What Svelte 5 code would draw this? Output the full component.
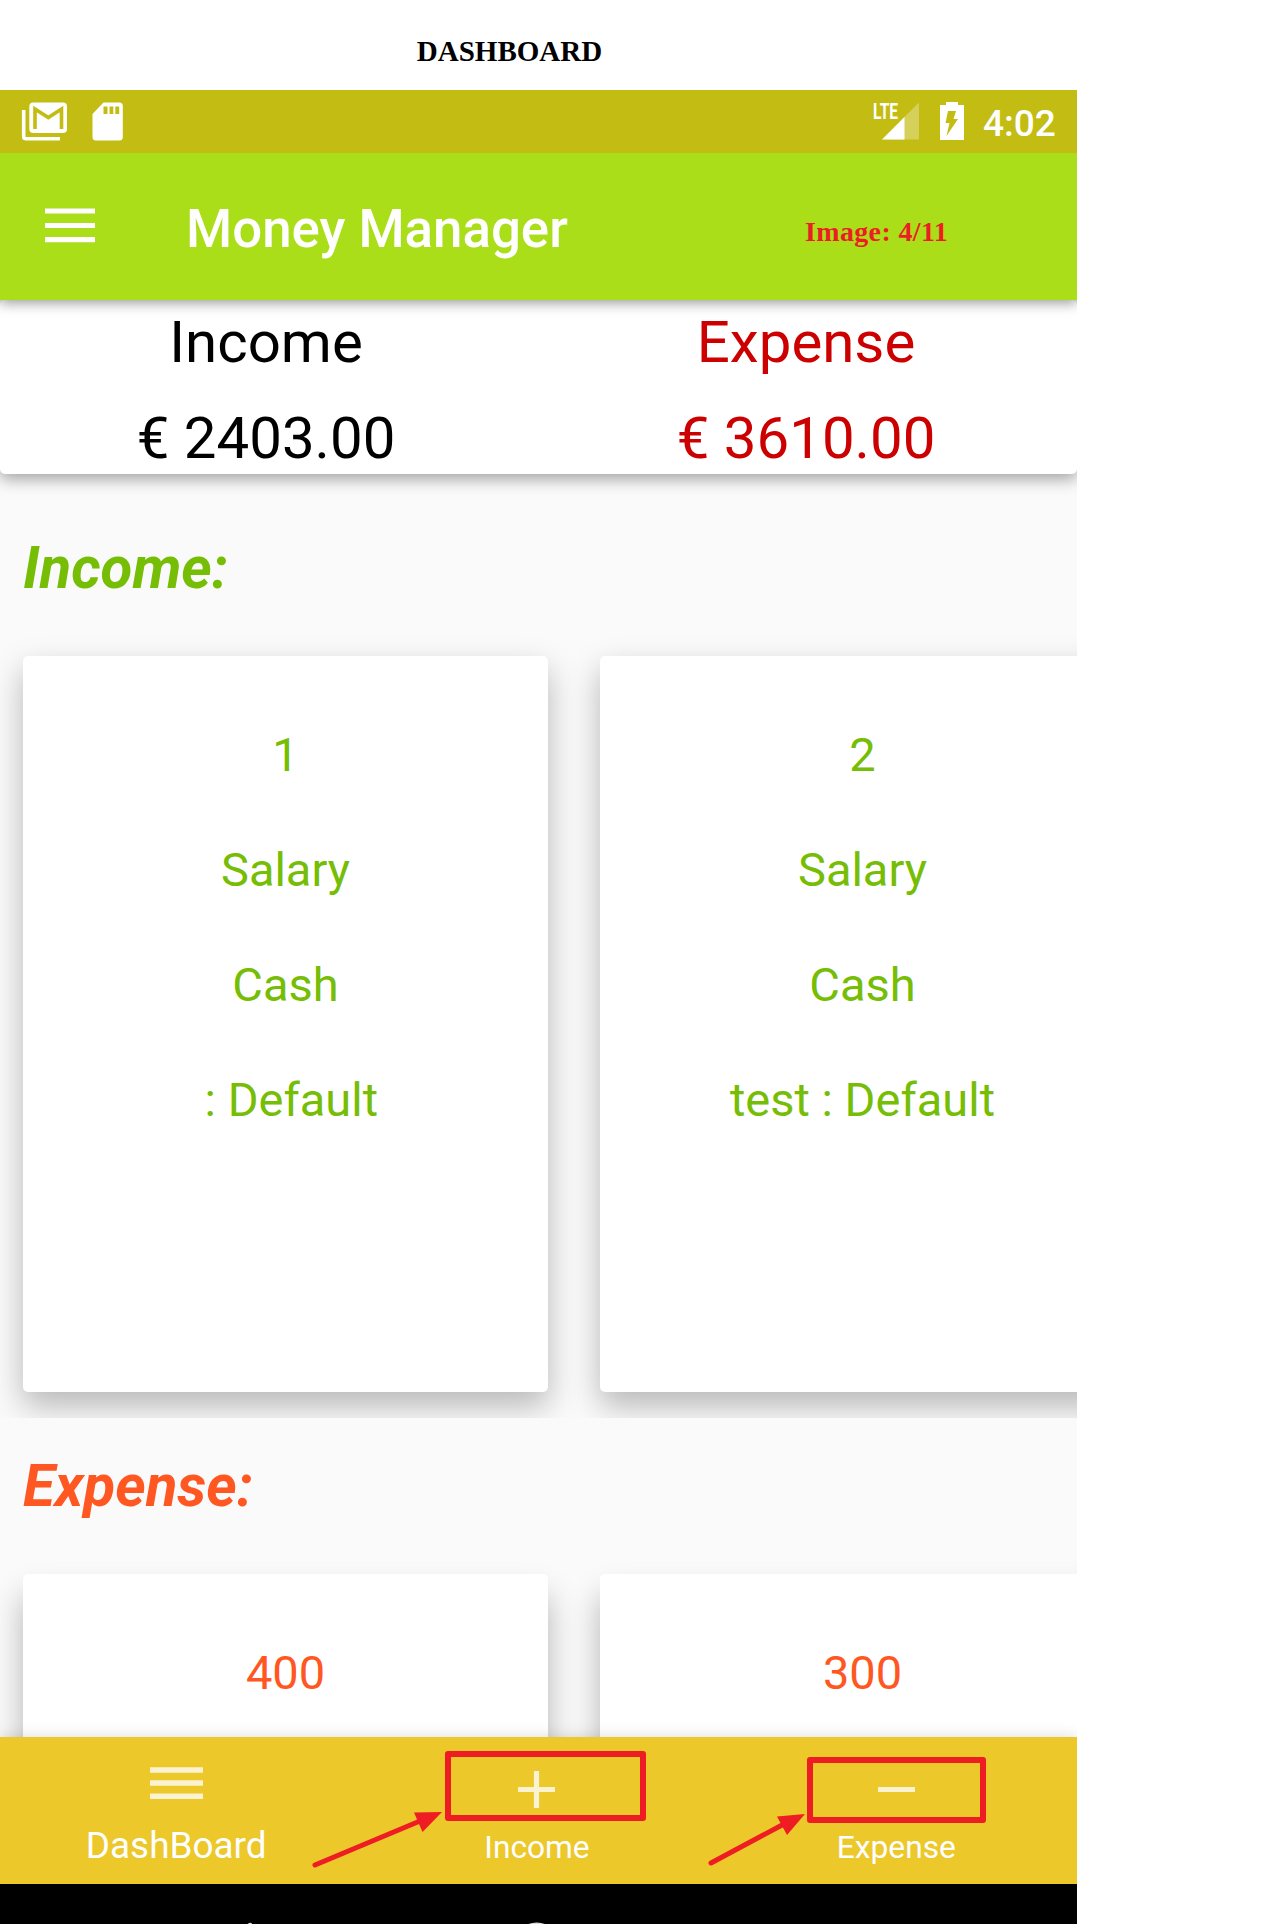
<script>
  const totals = [
    { label: 'Income', amount: '€ 2403.00', kind: 'in' },
    { label: 'Expense', amount: '€ 3610.00', kind: 'out' }
  ];
  const incomeCards = [
    ['1', 'Salary', 'Cash', ' : Default'],
    ['2', 'Salary', 'Cash', 'test : Default']
  ];
  const expenseCards = [['400'], ['300']];
</script>

<div class="page">
  <h1>DASHBOARD</h1>
  <div class="phone">
    <div class="status">
      <svg class="left-icons" width="92" height="63" viewBox="0 0 92 63">
        <path d="M23.700 20V46.500Q23.700 48.800 26 48.800H60" fill="none" stroke="#fff" stroke-width="3.600" />
        <rect x="29.300" y="12.500" width="37.700" height="30.500" rx="4" fill="#fff" />
        <path d="M35 39V19L48.300 27.500L61.500 19V39" fill="none" stroke="#c3bc13" stroke-width="3.600" />
      </svg>
      <svg class="sd" width="32" height="40" viewBox="0 0 32 40">
        <path d="M11.500 .500H27.500Q30.800 .500 30.800 4V35Q30.800 38.500 27.500 38.500H4Q.500 38.500 .500 35V12Z" fill="#fff" />
        <path d="M11.500 4.500H15.500V12H11.500ZM17.500 4.500H21.300V12H17.500ZM23.300 4.500H27.200V12H23.300Z" fill="#c3bc13" />
      </svg>
      <span class="space"></span>
      <svg class="signal" width="47" height="40" viewBox="0 0 47 40">
        <path d="M46 .500V37.500H9Z" fill="#fff" opacity=".3" />
        <path d="M31.500 15V37.500H9Z" fill="#fff" />
        <text class="lte" x="0" y="17" textLength="25" lengthAdjust="spacingAndGlyphs">LTE</text>
      </svg>
      <svg class="battery" width="24" height="38" viewBox="0 0 24 38">
        <path d="M0 3H6V0H18V3H24V38H0Z" fill="#fff" />
        <path d="M8 9H16L13.500 17H18L6.500 34L9.500 21H5.500Z" fill="#c3bc13" />
      </svg>
      <span class="clock">4:02</span>
    </div>
    <header>
      <svg class="menu" width="50" height="36" viewBox="0 0 50 36">
        <path d="M0 3H50M0 17.500H50M0 31.700H50" stroke="#fff" stroke-width="5.200" />
      </svg>
      <span class="title">Money Manager</span>
      <span class="counter">Image: 4/11</span>
    </header>
    <section class="summary">
      {#each totals as t}
        <div class="total {t.kind}"><span>{t.label}</span><span>{t.amount}</span></div>
      {/each}
    </section>
    <h2 class="green">Income:</h2>
    <div class="strip green">
      {#each incomeCards as lines}
        <article>{#each lines as line}<p>{line}</p>{/each}</article>
      {/each}
    </div>
    <h2 class="orange second">Expense:</h2>
    <div class="strip orange short">
      {#each expenseCards as lines}
        <article>{#each lines as line}<p>{line}</p>{/each}</article>
      {/each}
    </div>
    <nav>
      <div class="tab active">
        <svg width="53" height="32" viewBox="0 0 53 32"><path d="M0 3H53M0 16H53M0 29.200H53" stroke="#fbf2d1" stroke-width="5.600" /></svg>
        <span>DashBoard</span>
      </div>
      <div class="tab">
        <svg width="37" height="37" viewBox="0 0 37 37"><path d="M0 18.500H37M18.500 0V37" stroke="#fbf2d1" stroke-width="5.200" /></svg>
        <span>Income</span>
      </div>
      <div class="tab">
        <svg width="37" height="37" viewBox="0 0 37 37"><path d="M0 18.500H37" stroke="#fbf2d1" stroke-width="5.200" /></svg>
        <span>Expense</span>
      </div>
      <svg class="marks" width="1077" height="147" viewBox="0 0 1077 147">
        <g fill="none" stroke="#ee1d23" stroke-width="6" stroke-linejoin="round" stroke-linecap="round">
          <rect x="448" y="17" width="195" height="64" />
          <rect x="810" y="23" width="173" height="60" />
          <path d="M315 128L420 84M711 126L784 87" stroke-width="5" />
        </g>
        <path d="M442 75L414 75.500L422.500 95ZM805 77L777 79.500L787 98Z" fill="#ee1d23" />
      </svg>
    </nav>
    <footer>
      <svg width="1077" height="40" viewBox="0 0 1077 40">
        <path d="M250 41.300L226 56L250 70Z" fill="none" stroke="#ddd" stroke-width="5" stroke-linejoin="round" />
        <circle cx="536.700" cy="61" r="20" fill="none" stroke="#ddd" stroke-width="5" />
      </svg>
    </footer>
  </div>
</div>

<style>
  :global(body) { background: #fff; overflow: hidden; }
  .page { width: 1280px; height: 1924px; overflow: hidden; background: #fff; }
  h1 { margin: 0; width: 1019px; height: 90px; box-sizing: border-box; padding-top: 35px; text-align: center; font: bold 29px/32px "Liberation Serif", serif; color: #000; }
  .phone { width: 1077px; height: 1834px; display: flex; flex-direction: column; overflow: hidden; background: #fafafa; font-family: Roboto, sans-serif; }
  .status { position: relative; z-index: 3; height: 63px; flex: none; display: flex; background: #c3bc13; color: #fff; }
  .left-icons { width: 92px; flex: none; }
  .sd { margin-top: 12px; }
  .space { flex: 1; }
  .signal { margin: 12px 20px 0 0; overflow: visible; }
  .lte { fill: #fff; font-size: 22px; font-weight: 700; }
  .battery { margin: 12px 19px 0 0; }
  .clock { font-size: 37px; font-weight: 500; line-height: 43px; padding-top: 12px; width: 94px; white-space: nowrap; }
  header { position: relative; z-index: 2; height: 147px; flex: none; display: flex; background: #a9de18; box-shadow: 0 3px 12px rgba(0, 0, 0, .4); }
  .menu { margin: 55px 0 0 45px; }
  .title { margin: 45px 0 0 91px; width: 619px; color: #fff; font-size: 52.8px; line-height: 62px; font-weight: 500; }
  .counter { padding-top: 63px; color: #ee1d23; font: bold 28px/32px "Liberation Serif", serif; letter-spacing: .35px; }
  .summary { position: relative; z-index: 1; height: 174px; flex: none; display: flex; background: #fff; border-radius: 5px; box-shadow: 0 5px 16px rgba(0, 0, 0, .36); }
  .total { width: 535px; display: flex; flex-direction: column; padding-top: 8px; text-align: center; font-size: 58.2px; line-height: 68px; gap: 28px; color: #000; }
  .total.out { color: #c00; width: 545px; padding-left: 3px; }
  h2 { margin: 0; flex: none; height: 145px; box-sizing: border-box; padding: 60px 0 0 23px; font-size: 58.2px; line-height: 68px; font-weight: 700; font-style: italic; }
  h2.second { height: 119px; padding-top: 34px; }
  h2.green, .strip.green { color: #76bd06; }
  h2.orange, .strip.orange { color: #ff5722; }
  .strip { height: 799px; flex: none; box-sizing: border-box; display: flex; gap: 52px; padding: 37px 0 0 23px; overflow: hidden; }
  .strip.short { height: 200px; }
  article { width: 525px; height: 736px; flex: none; box-sizing: border-box; border-radius: 5px; padding-top: 71px; background: #fff; box-shadow: 0 14px 32px rgba(0, 0, 0, .27); }
  .short article { box-shadow: 0 22px 32px rgba(0, 0, 0, .28); }
  p { margin: 0; height: 115px; text-align: center; font-size: 47px; line-height: 56px; white-space: pre; }
  nav { position: relative; height: 147px; flex: none; display: flex; background: #ecc82a; color: #fff; box-shadow: 0 0 14px rgba(0, 0, 0, .14); }
  .tab { width: 354px; margin-right: 6px; display: flex; flex-direction: column; align-items: center; font-size: 31.7px; line-height: 38px; padding-top: 34px; box-sizing: border-box; }
  .tab + .tab { margin: 0 4px 0 2px; }
  .tab span { margin-top: 21px; }
  .tab.active { width: 353px; font-size: 36.9px; line-height: 44px; padding-top: 30px; }
  .tab.active span { margin-top: 25px; }
  .marks { position: absolute; left: 0; top: 0; }
  footer { position: relative; height: 40px; flex: none; background: #000; }
  footer svg { display: block; }
</style>
